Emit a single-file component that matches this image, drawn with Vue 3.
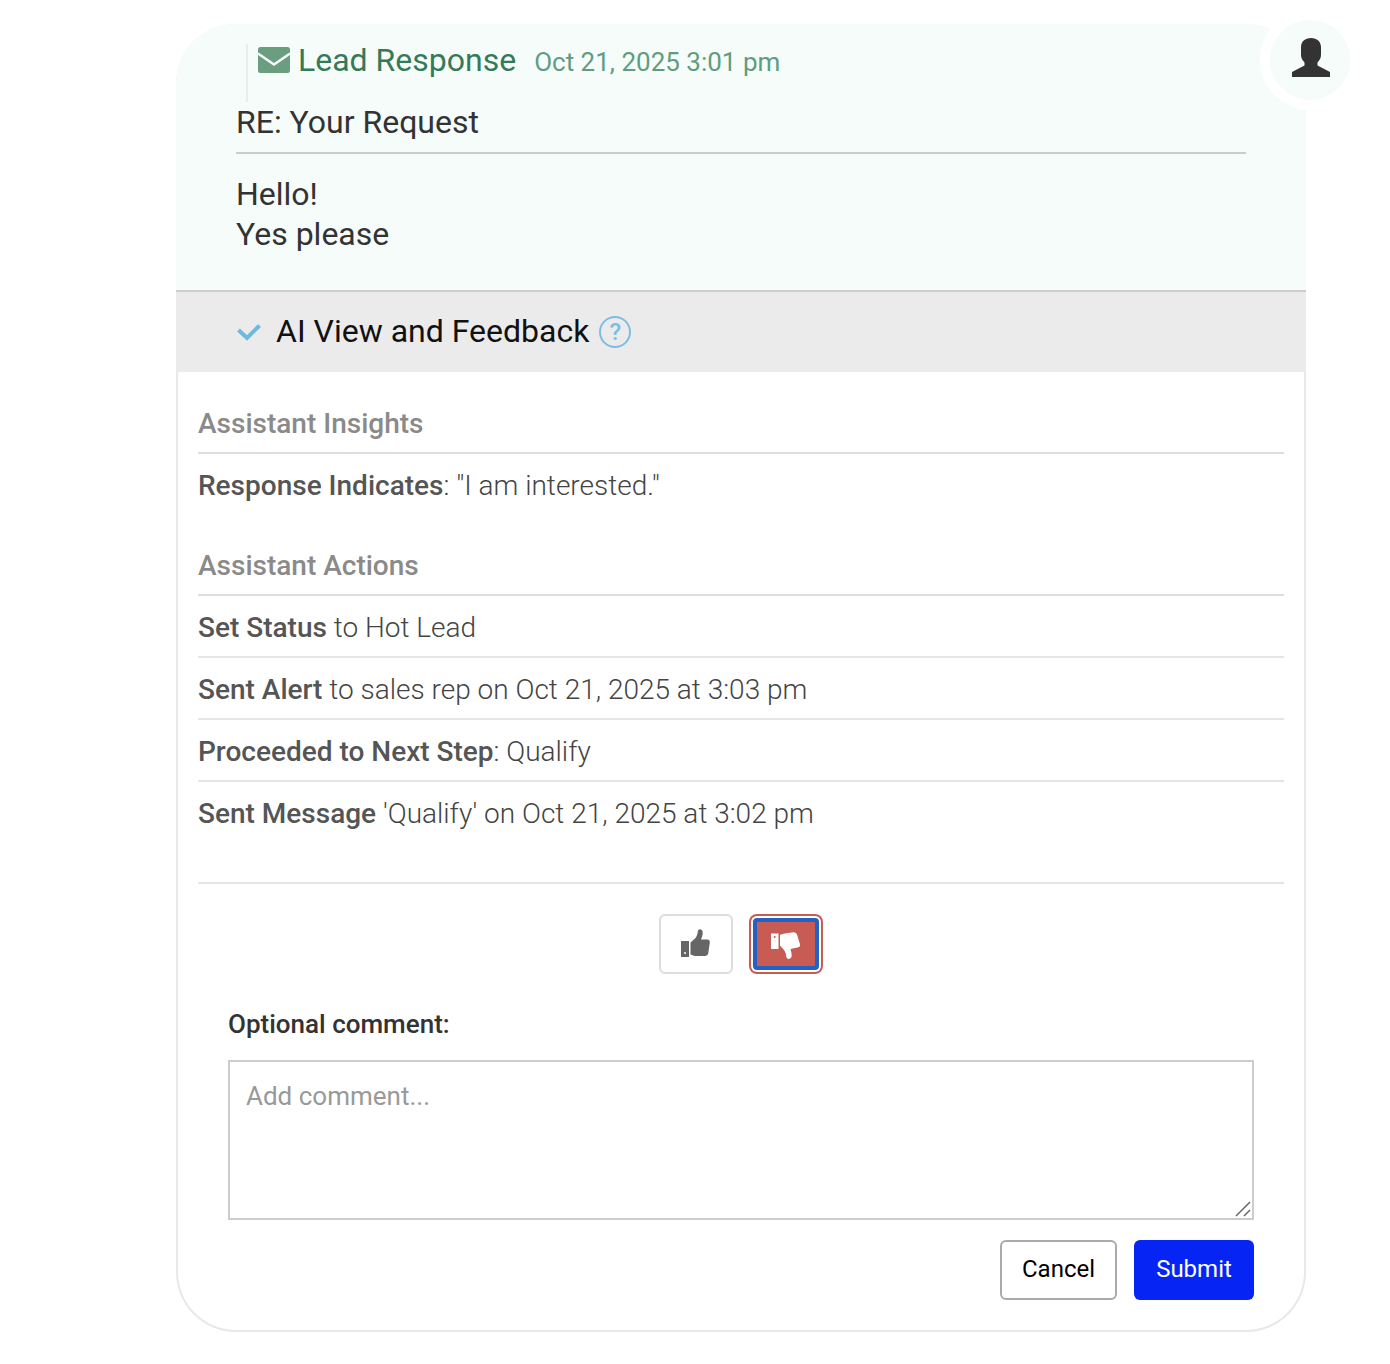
<template>
    <div class="page">
        <div class="card">
            <div class="avatar">
                <svg class="person" viewBox="0 0 38 39" width="38" height="39">
                    <path fill="#333"
                        d="M19 0c-6 0-10 3.500-10 9.500v7c0 3 1 5.500 3.500 8v3L0 34v5h38v-5l-12.500-6.500v-3c2.500-2.500 3.500-5 3.500-8v-7C29 3.500 25 0 19 0z" />
                </svg>
            </div>

            <div class="message">
                <div class="message-title">
                    <svg class="mail-icon" viewBox="0 0 32 26" width="32" height="26">
                        <rect width="32" height="26" rx="2.500" fill="#6b9e80" />
                        <path fill="none" stroke="#f5fcfa" stroke-width="2.500" d="M0 6.500 16 17.500 32 6.500" />
                    </svg>
                    <span class="lead">Lead Response</span>
                    <span class="date">Oct 21, 2025 3:01 pm</span>
                </div>
                <div class="subject">RE: Your Request</div>
                <div class="body-text">
                    <div>Hello!</div>
                    <div>Yes please</div>
                </div>
            </div>

            <div class="ai-bar">
                <svg class="check" viewBox="0 0 24 18" width="24" height="18">
                    <path fill="none" stroke="#6fb8de" stroke-width="4" d="M1.500 7 10 15 22.500 2.500" />
                </svg>
                <span class="ai-label">AI View and Feedback</span>
                <span class="help">?</span>
            </div>

            <div class="details">
                <div class="section-title">Assistant Insights</div>
                <div class="row"><b>Response Indicates</b>: "I am interested."</div>

                <div class="section-title second">Assistant Actions</div>
                <div v-for="(a, i) in actions" :key="i" class="row" :class="{ lined: i < actions.length - 1 }">
                    <b>{{ a.label }}</b>{{ a.text }}
                </div>
            </div>

            <div class="feedback">
                <div class="thumbs">
                    <button class="thumb">
                        <svg viewBox="0 0 30 30" width="30" height="30">
                            <path fill="#666"
                                d="M0 12h8v16H0zM9.500 13.500l5-4.500c1.500-1.800 2-4 2.300-6.500.2-1.500 1.200-2.300 2.500-2.200 1.700.2 2.500 1.800 2.400 3.700-.1 2.500-1 4.600-1.700 6.500h6c2 0 3 1.300 2.800 3l-1.500 10.500c-.3 1.700-1.600 3-3.500 3H15c-2 0-3.500-.7-5.500-1.500z" />
                            <circle cx="4" cy="24" r="1" fill="#fff" />
                        </svg>
                    </button>
                    <button class="thumb down">
                        <svg viewBox="0 0 30 30" width="30" height="30">
                            <path fill="#fff"
                                d="M0 4.500h7.500V20H0zM9 16.500l4 4.500c1.500 1.800 2 4 2.300 6.500.2 1.500 1.200 2.500 2.500 2.400 2-.2 3-1.800 2.900-3.700-.1-2.500-.8-4.600-1.200-6.200l7-1.500c2-.4 3-1.600 2.500-3.300L26 5.500C25.500 4 24 3 22.300 3.200L14 4.500c-2 .3-3.500.8-5 1.500z" />
                            <circle cx="3.700" cy="8" r="1" fill="#c85c55" />
                        </svg>
                    </button>
                </div>

                <label class="comment-label">Optional comment:</label>
                <div class="comment-box">
                    <textarea class="comment" placeholder="Add comment..."></textarea>
                    <svg class="grip" viewBox="0 0 18 18" width="18" height="18">
                        <path fill="none" stroke="#666" stroke-width="1.500" d="M2 16 16 2M10 16l6-6" />
                    </svg>
                </div>

                <div class="actions">
                    <button class="btn cancel">Cancel</button>
                    <button class="btn submit">Submit</button>
                </div>
            </div>
        </div>
    </div>
</template>

<script setup>
const actions = [
    { label: 'Set Status', text: ' to Hot Lead' },
    { label: 'Sent Alert', text: ' to sales rep on Oct 21, 2025 at 3:03 pm' },
    { label: 'Proceeded to Next Step', text: ': Qualify' },
    { label: 'Sent Message', text: " 'Qualify' on Oct 21, 2025 at 3:02 pm" },
]
</script>

<style>
body {
    background: #fff;
}
</style>

<style scoped>
.page {
    height: 1364px;
    padding: 24px 84px 0 176px;
    box-sizing: border-box;
    font-family: Roboto, sans-serif;
}

.card {
    position: relative;
    height: 1308px;
    box-sizing: border-box;
    border: 2px solid #e8e8e8;
    border-top: 0;
    border-radius: 60px;
    background: #fff;
}

.avatar {
    position: absolute;
    top: -14px;
    right: -56px;
    width: 80px;
    height: 80px;
    border: 10px solid #fff;
    border-radius: 50%;
    background: #f5fcfa;
    display: flex;
    align-items: center;
    justify-content: center;
}

.person {
    margin: -5px 0 0 2px;
}

.message {
    margin: 0 -2px;
    box-sizing: border-box;
    padding: 20px 60px 0;
    background: #f5fcfa;
    border-radius: 60px 60px 0 0;
    border-bottom: 2px solid #ccc;
    height: 268px;
}

.message-title {
    display: flex;
    align-items: flex-start;
    height: 58px;
    margin-left: 10px;
    padding-left: 10px;
    border-left: 2px solid #e8eeec;
}

.mail-icon {
    margin-top: 3px;
    margin-right: 8px;
    flex-shrink: 0;
}

.lead {
    font-size: 32px;
    line-height: 32px;
    color: #357a58;
}

.date {
    margin-left: 18px;
    margin-top: 2px;
    font-size: 26px;
    line-height: 32px;
    color: #609d80;
}

.subject {
    height: 50px;
    font-size: 32px;
    line-height: 40px;
    color: #333;
    border-bottom: 2px solid #ccc;
}

.body-text {
    margin-top: 20px;
    font-size: 32px;
    line-height: 40px;
    color: #333;
}

.ai-bar {
    margin: 0 -2px;
    height: 80px;
    padding-left: 60px;
    background: #ebebeb;
    display: flex;
    align-items: center;
    font-size: 32px;
    color: #111;
}

.ai-label {
    margin-top: -2px;
}

.check {
    margin: 0 15px 0 1px;
}

.help {
    margin-left: 10px;
    width: 28px;
    height: 28px;
    border: 2.500px solid #7dbde0;
    border-radius: 50%;
    font-size: 24px;
    font-weight: 500;
    line-height: 29px;
    text-align: center;
    color: #7dbde0;
}

.details {
    padding: 35px 20px 0;
    font-size: 28px;
    font-weight: 300;
    color: #444;
}

.section-title {
    height: 45px;
    line-height: 34px;
    font-weight: 500;
    color: #8a8a8a;
    border-bottom: 2px solid #ddd;
}

.section-title.second {
    margin-top: 35px;
}

.row {
    height: 60px;
    line-height: 64px;
}

.row b {
    font-weight: 500;
    color: #555;
}

.row.lined {
    border-bottom: 2px solid #e5e5e5;
}

.feedback {
    margin: 40px 20px 0;
    padding: 30px 30px 0;
    border-top: 2px solid #e5e5e5;
}

.thumbs {
    display: flex;
    justify-content: center;
    gap: 16px;
}

.thumb {
    width: 74px;
    height: 60px;
    padding: 0;
    box-sizing: border-box;
    border: 2px solid #ddd;
    border-radius: 6px;
    background: #fff;
    display: flex;
    align-items: center;
    justify-content: center;
}

.thumb.down {
    background: #c85c55;
    border: 4px solid #2461c4;
    box-shadow: 0 0 0 2px #fff, 0 0 0 4px #c85c55;
    width: 66px;
    height: 52px;
    margin: 4px;
    border-radius: 4px;
}

.comment-label {
    display: block;
    margin-top: 33px;
    font-size: 26px;
    line-height: 34px;
    font-weight: 500;
    color: #333;
}

.comment-box {
    position: relative;
    margin-top: 19px;
}

.comment {
    display: block;
    box-sizing: border-box;
    width: 100%;
    height: 160px;
    padding: 16px;
    border: 2px solid #ccc;
    font-family: Roboto, sans-serif;
    font-size: 26px;
    line-height: 36px;
    color: #333;
    outline: none;
    border-radius: 0;
    resize: none;
}

.comment::placeholder {
    color: #999;
}

.grip {
    position: absolute;
    right: 2px;
    bottom: 2px;
    pointer-events: none;
}

.actions {
    display: flex;
    justify-content: flex-end;
    gap: 17px;
    margin-top: 20px;
}

.btn {
    height: 60px;
    padding: 0 0 2px;
    border-radius: 6px;
    font-family: Roboto, sans-serif;
    font-size: 24px;
    box-sizing: border-box;
}

.cancel {
    width: 117px;
    background: #fff;
    border: 2px solid #aaa;
    color: #000;
}

.submit {
    width: 120px;
    background: #0625f5;
    border: 0;
    color: #fff;
}
</style>
